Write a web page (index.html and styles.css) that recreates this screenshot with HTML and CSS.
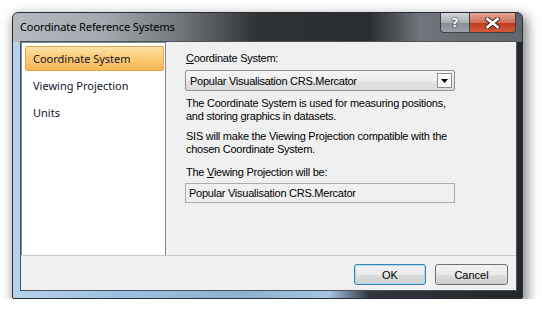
FILE: index.html
```html
<!DOCTYPE html>
<html>

<head>
    <title>Coordinate Reference Systems</title>
    <link rel="stylesheet" href="styles.css">
</head>

<body>
    <div class="window">
        <div class="titlebar">
            <span class="title">Coordinate Reference Systems</span>
            <div class="caption-buttons">
                <div class="cap help">?</div>
                <div class="cap close">
                    <svg width="15" height="12" viewBox="0 0 15 12">
                        <path d="M2.5 2 L12.5 10 M12.5 2 L2.5 10" stroke="#3a1a14" stroke-width="4.6" stroke-linecap="square" />
                        <path d="M2.5 2 L12.5 10 M12.5 2 L2.5 10" stroke="#ffffff" stroke-width="2.8" stroke-linecap="square" />
                    </svg>
                </div>
            </div>
        </div>

        <div class="client">
            <div class="main">
                <ul class="nav">
                    <li class="selected">Coordinate System</li>
                    <li>Viewing Projection</li>
                    <li>Units</li>
                </ul>

                <div class="panel">
                    <label class="label-top"><u>C</u>oordinate System:</label>
                    <div class="combo">
                        <span>Popular Visualisation CRS.Mercator</span>
                        <span class="combo-arrow">
                            <svg width="7" height="4" viewBox="0 0 7 4">
                                <path d="M0 0 H7 L3.5 4 Z" fill="#000" />
                            </svg>
                        </span>
                    </div>
                    <p class="note first">The Coordinate System is used for measuring positions,<br>and storing graphics in datasets.</p>
                    <p class="note">SIS will make the Viewing Projection compatible with the<br>chosen Coordinate System.</p>
                    <label class="label-field">The <u>V</u>iewing Projection will be:</label>
                    <div class="field">Popular Visualisation CRS.Mercator</div>
                </div>
            </div>

            <div class="footer">
                <button class="btn default">OK</button>
                <button class="btn cancel">Cancel</button>
            </div>
        </div>
    </div>
</body>

</html>
```

FILE: styles.css
```css
* {
    box-sizing: border-box;
}

body {
    margin: 0;
    background: #ffffff;
    font-family: "Liberation Sans", Arial, sans-serif;
}

.window {
    margin: 12px 0 0 12px;
    width: 511px;
    height: 287px;
    padding: 0 5px 7px 7px;
    display: flex;
    flex-direction: column;
    border: 1px solid #2a2e33;
    border-radius: 6px 6px 2px 2px;
    background:
        linear-gradient(to right, #b5bac0 0%, #a3a8ae 18%, #6d7277 34%, #2d3134 48%, #2a2d31 70%, #6f757b 80%, #5f656b 100%) no-repeat 0 0 / 100% 29px,
        linear-gradient(to right, #b6d2ee 0%, #9fc0e2 20%, #8fb0d0 45%, #a5c4e3 62%, #30363c 70%, #22272b 100%) no-repeat 0 29px / 100% 100%;
    box-shadow: 3px 5px 12px 2px rgba(0, 0, 0, 0.45);
}

.titlebar {
    height: 28px;
    display: flex;
    align-items: flex-start;
}

.title {
    font-family: "Noto Sans", "Open Sans", sans-serif;
    font-size: 11px;
    color: #000;
    margin-top: 6px;
    letter-spacing: -0.1px;
}

.caption-buttons {
    margin-left: auto;
    margin-right: 1px;
    display: flex;
}

.cap {
    height: 20px;
    display: flex;
    align-items: center;
    justify-content: center;
    border: 1px solid #3c4146;
    border-top: none;
}

.help {
    width: 29px;
    border-right: none;
    border-radius: 0 0 0 4px;
    background: linear-gradient(#d3d7db, #a8aeb4 50%, #868d94 51%, #9aa1a8);
    color: #fff;
    font-family: "DejaVu Sans", sans-serif;
    font-weight: bold;
    font-size: 12px;
    text-shadow: 0 0 2px #222, 0 0 1px #222;
}

.close {
    width: 47px;
    border-radius: 0 0 4px 0;
    background: linear-gradient(#e9a797, #d16f5a 50%, #c0391f 51%, #d25a3c);
}

.client {
    height: 250px;
    display: flex;
    flex-direction: column;
    border: 1px solid #4b5157;
    background: #f0f0f0;
}

.main {
    height: 213px;
    display: flex;
}

.nav {
    list-style: none;
    margin: 0;
    padding: 3px 0 0 3px;
    width: 145px;
    height: 214px;
    background: #ffffff;
    border: 1px solid #828790;
    border-bottom: none;
    font-family: "Noto Sans", "Open Sans", sans-serif;
    font-size: 11px;
    color: #10142a;
}

.nav li {
    height: 25px;
    width: 139px;
    margin-bottom: 2px;
    padding-left: 7px;
    line-height: 23px;
    border: 1px solid transparent;
    border-radius: 2px;
}

.nav li.selected {
    background: linear-gradient(#fde2a8, #fbcb76 45%, #f8b856);
    border-color: #e5a54c;
}

.panel {
    padding: 10px 0 0 20px;
    font-size: 11px;
    letter-spacing: -0.25px;
    color: #000;
}

.panel label {
    display: block;
    line-height: 13px;
}

.combo {
    margin: 5px 0 0 -1px;
    width: 270px;
    height: 21px;
    display: flex;
    align-items: center;
    padding-left: 4px;
    border: 1px solid #8e8e8e;
    border-radius: 2px;
    background: linear-gradient(#f4f4f4, #eeeeee 50%, #e4e4e4 51%, #dcdcdc);
}

.combo-arrow {
    margin-left: auto;
    margin-right: 2px;
    width: 15px;
    height: 15px;
    display: flex;
    align-items: center;
    justify-content: center;
    border: 1px solid #8f8f8f;
    background: linear-gradient(#ffffff, #f4f4f4);
}

.note {
    margin: 7px 0 0 0;
    line-height: 13px;
}

.note.first {
    margin-top: 6px;
}

.label-field {
    margin-top: 10px;
}

.field {
    margin: 4px 0 0 -1px;
    width: 270px;
    height: 20px;
    line-height: 18px;
    padding-left: 3px;
    border: 1px solid #abadb3;
    background: #f0f0f0;
}

.footer {
    flex: 1;
    display: flex;
    justify-content: flex-end;
    gap: 9px;
    padding: 8px 8px 0 0;
    border-top: 1px solid #c9c9c9;
}

.btn {
    width: 72px;
    height: 21px;
    padding: 0;
    font-family: "Liberation Sans", Arial, sans-serif;
    font-size: 11px;
    color: #000;
    border: 1px solid #707070;
    border-radius: 3px;
    background: linear-gradient(#f2f2f2, #ebebeb 50%, #dddddd 51%, #cfcfcf);
}

.btn.default {
    border-color: #3c7fb1;
    box-shadow: inset 0 0 0 1px #a9dcf6;
}

.btn.cancel {
    width: 73px;
}
```
